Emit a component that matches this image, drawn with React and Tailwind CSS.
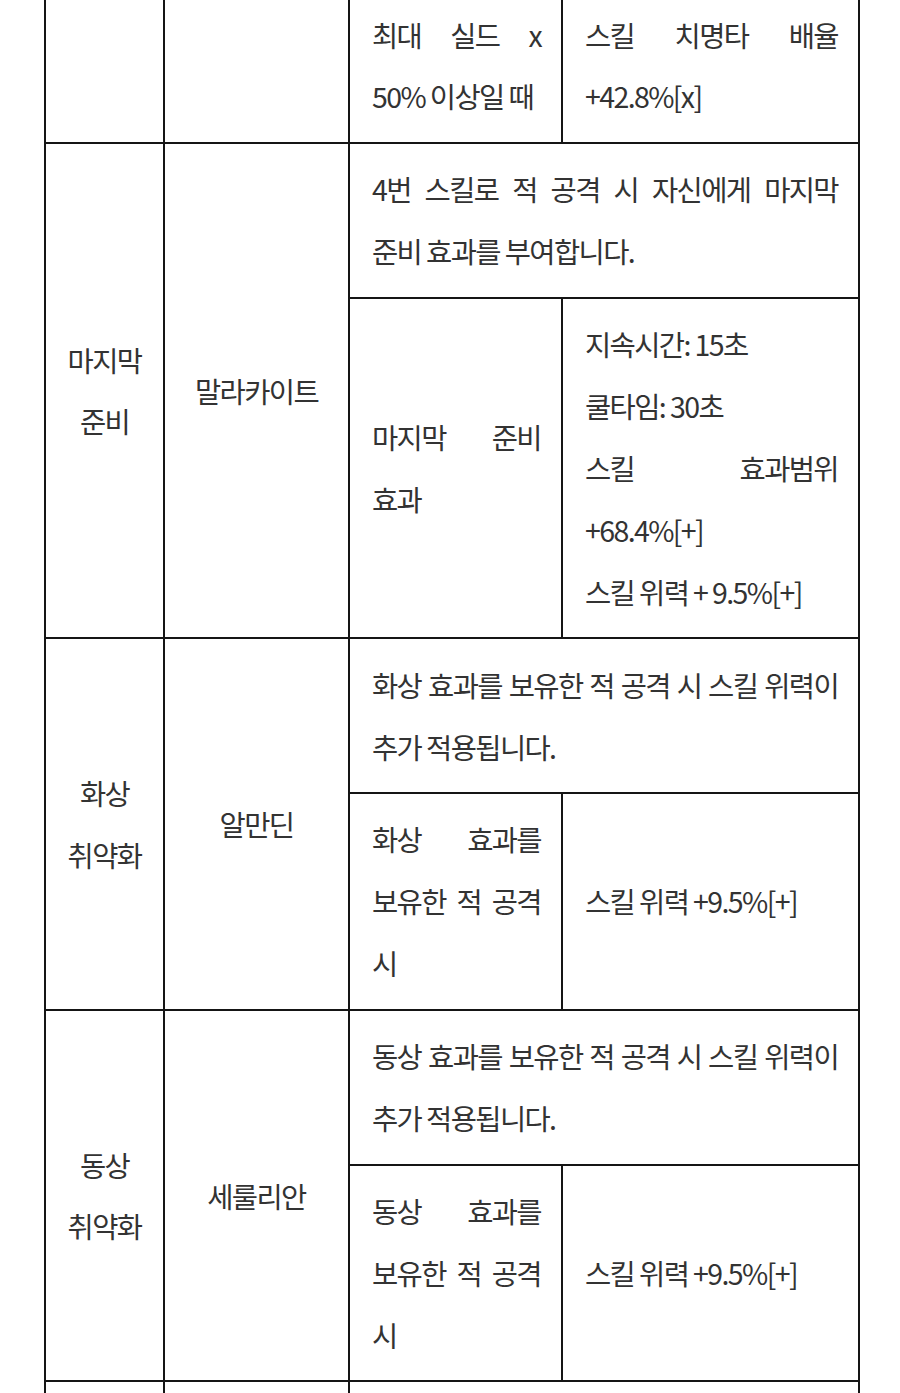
import { Fragment } from "react";

const rows = [
  {
    name: ["마지막", "준비"],
    gem: "말라카이트",
    desc: "4번 스킬로 적 공격 시 자신에게 마지막 준비 효과를 부여합니다.",
    cond: "마지막 준비 효과",
    effects: [
      ["지속시간: 15초"],
      ["쿨타임: 30초"],
      ["스킬 효과범위 ", "+68.4%[+]"],
      ["스킬 위력 + 9.5%[+]"],
    ],
  },
  {
    name: ["화상", "취약화"],
    gem: "알만딘",
    desc: "화상 효과를 보유한 적 공격 시 스킬 위력이 추가 적용됩니다.",
    cond: "화상 효과를 보유한 적 공격 시",
    effects: [["스킬 위력 ", "+9.5%[+]"]],
  },
  {
    name: ["동상", "취약화"],
    gem: "세룰리안",
    desc: "동상 효과를 보유한 적 공격 시 스킬 위력이 추가 적용됩니다.",
    cond: "동상 효과를 보유한 적 공격 시",
    effects: [["스킬 위력 ", "+9.5%[+]"]],
  },
];

const cell = "border-2 border-[#151515] pl-[22px] pr-[20px] py-[14.5px] align-middle";

const App = () => {
  return (
    <div
      className="w-full h-[1393px] overflow-hidden bg-white text-[#333] text-[28.5px] leading-[61.9px] tracking-[-1.6px] break-keep"
      style={{ fontFamily: '"Noto Sans CJK KR", "Noto Sans", sans-serif' }}
    >
      <table className="table-fixed border-collapse w-[816px] ml-[44px] -mt-[13px]">
        <colgroup>
          <col className="w-[119px]" />
          <col className="w-[185px]" />
          <col className="w-[213px]" />
          <col className="w-[297px]" />
        </colgroup>
        <tbody>
          <tr>
            <td className={cell}></td>
            <td className={cell}></td>
            <td className={`${cell} text-justify`}>최대 실드 x 50% 이상일 때</td>
            <td className={`${cell} text-justify`}>
              스킬 치명타 배율 <span className="whitespace-nowrap">+42.8%[x]</span>
            </td>
          </tr>
          {rows.map((row, index) => (
            <Fragment key={index}>
              <tr>
                <td rowSpan={2} className={`${cell} text-center !px-2`}>
                  {row.name.map((n, i) => (
                    <div key={i}>{n}</div>
                  ))}
                </td>
                <td rowSpan={2} className={`${cell} text-center !px-2`}>
                  {row.gem}
                </td>
                <td colSpan={2} className={`${cell} text-justify`}>
                  {row.desc}
                </td>
              </tr>
              <tr>
                <td className={`${cell} text-justify`}>{row.cond}</td>
                <td className={`${cell} text-justify`}>
                  {row.effects.map(([text, tail], i) => (
                    <div key={i}>
                      {text}
                      {tail && <span className="whitespace-nowrap">{tail}</span>}
                    </div>
                  ))}
                </td>
              </tr>
            </Fragment>
          ))}
          <tr>
            <td className={`${cell} h-[200px]`}></td>
            <td className={cell}></td>
            <td colSpan={2} className={cell}></td>
          </tr>
        </tbody>
      </table>
    </div>
  );
};

export default App;
